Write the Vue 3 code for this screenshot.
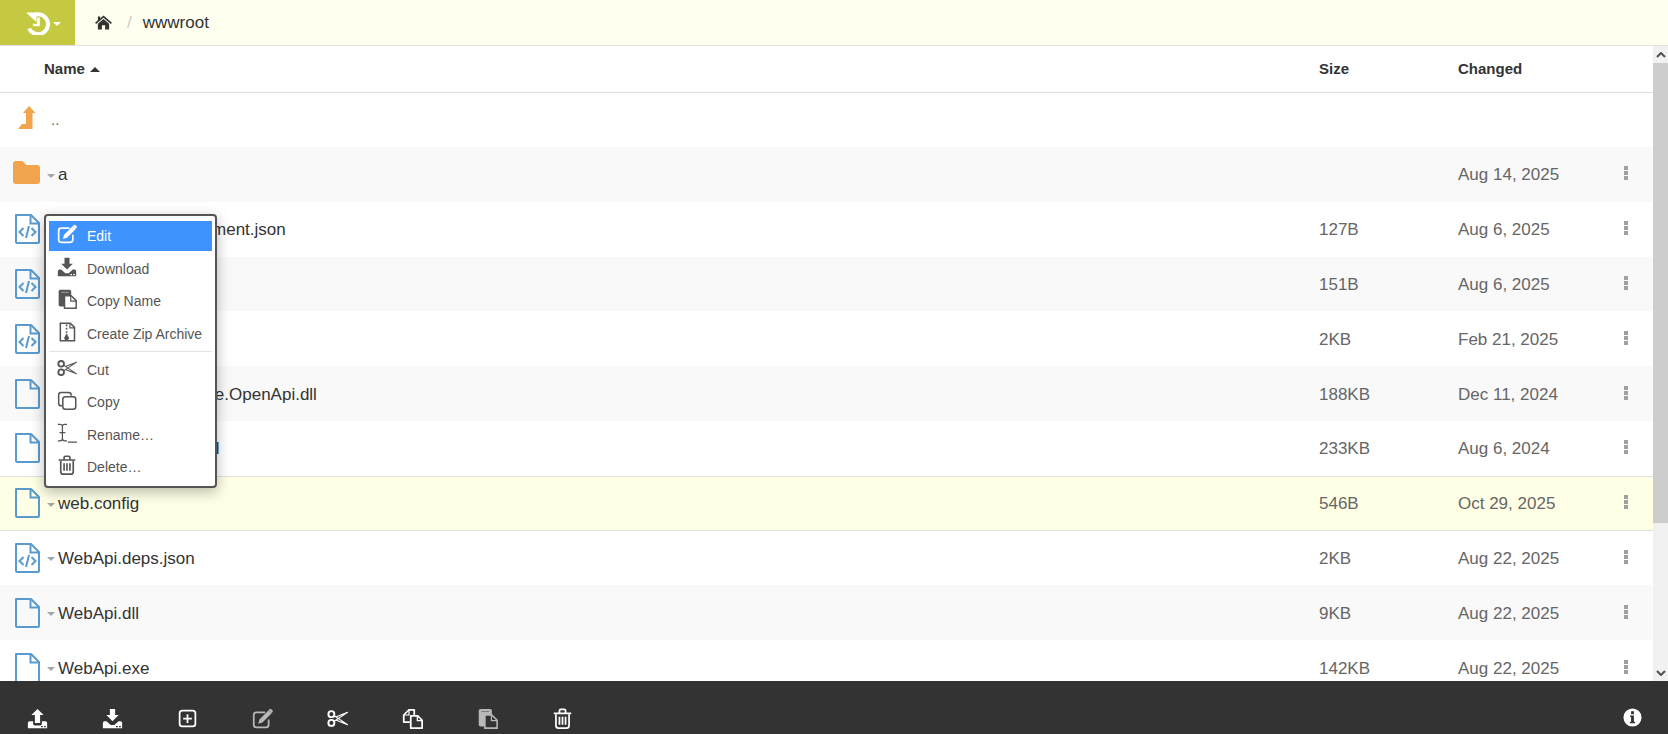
<script setup>
const files = [
  { name: 'a', icon: 'folder', size: '', date: 'Aug 14, 2025' },
  { name: 'appsettings.Development.json', icon: 'code', size: '127B', date: 'Aug 6, 2025' },
  { name: 'appsettings.json', icon: 'code', size: '151B', date: 'Aug 6, 2025' },
  { name: 'swagger.json', icon: 'code', size: '2KB', date: 'Feb 21, 2025' },
  { name: 'Microsoft.AspNetCore.OpenApi.dll', icon: 'file', size: '188KB', date: 'Dec 11, 2024' },
  { name: 'Microsoft.OpenApi.dll', icon: 'file', size: '233KB', date: 'Aug 6, 2024' },
  { name: 'web.config', icon: 'file', size: '546B', date: 'Oct 29, 2025', selected: true },
  { name: 'WebApi.deps.json', icon: 'code', size: '2KB', date: 'Aug 22, 2025' },
  { name: 'WebApi.dll', icon: 'file', size: '9KB', date: 'Aug 22, 2025' },
  { name: 'WebApi.exe', icon: 'file', size: '142KB', date: 'Aug 22, 2025' }
]
const menuTop = [
  { label: 'Edit', icon: 'i-edit', active: true },
  { label: 'Download', icon: 'i-download' },
  { label: 'Copy Name', icon: 'i-paste' },
  { label: 'Create Zip Archive', icon: 'i-zip' }
]
const menuBottom = [
  { label: 'Cut', icon: 'i-cut' },
  { label: 'Copy', icon: 'i-squares' },
  { label: 'Rename…', icon: 'i-rename' },
  { label: 'Delete…', icon: 'i-trash' }
]
const actions = [
  { icon: 'i-upload' },
  { icon: 'i-download' },
  { icon: 'i-plus' },
  { icon: 'i-edit', dim: true },
  { icon: 'i-cut' },
  { icon: 'i-copy' },
  { icon: 'i-paste', dim: true },
  { icon: 'i-trash' }
]
</script>

<template>
  <div class="app">
    <svg class="defs" aria-hidden="true">
      <symbol id="i-upload" viewBox="0 0 24 24">
        <path fill="currentColor" d="M12 1l7 7h-4v9H9V8H5z" />
        <path fill="currentColor" fill-rule="evenodd" d="M1 17q0-2 2-2h4v3q0 2 2 2h6q2 0 2-2v-3h4q2 0 2 2v6H1zM16 20.500v1.500h2v-1.500zM19.500 20.500v1.500h2v-1.500z" />
      </symbol>
      <symbol id="i-download" viewBox="0 0 24 24">
        <path fill="currentColor" d="M9 1h6v7h4l-7 7-7-7h4z" />
        <path fill="currentColor" fill-rule="evenodd" d="M1 17q0-2 2-2h2l5 4.500h4l5-4.500h2q2 0 2 2v6H1zM16 20.500v1.500h2v-1.500zM19.500 20.500v1.500h2v-1.500z" />
      </symbol>
      <symbol id="i-plus" viewBox="0 0 24 24">
        <rect x="3" y="3" width="18" height="18" rx="3" fill="none" stroke="currentColor" stroke-width="2" />
        <path d="M12 7v10M7 12h10" fill="none" stroke="currentColor" stroke-width="2" />
      </symbol>
      <symbol id="i-edit" viewBox="0 0 24 24">
        <path d="M19 13v6q0 3-3 3H5q-3 0-3-3V8q0-3 3-3h10" fill="none" stroke="currentColor" stroke-width="2" />
        <path fill="currentColor" d="M19 2.500l3.500 3.500-10.500 10.500-5 1.500 1.500-5zM20 1.500q1-1 2-.2l1.500 1.500q.8 1-.2 2l-.8.800-3.500-3.500z" />
      </symbol>
      <symbol id="i-cut" viewBox="0 0 24 24">
        <circle cx="5" cy="7" r="3.400" fill="none" stroke="currentColor" stroke-width="2.200" />
        <circle cx="5" cy="17" r="3.400" fill="none" stroke="currentColor" stroke-width="2.200" />
        <path d="M7.800 8.500l15.700 10.500-13.500-5.300M7.800 15.500l15.700-10.500-13.500 5.300" fill="none" stroke="currentColor" stroke-width="1.300" stroke-linejoin="round" />
      </symbol>
      <symbol id="i-copy" viewBox="0 0 24 24">
        <path d="M9 16H2V8l6-6h6v6" fill="none" stroke="currentColor" stroke-width="2" stroke-linejoin="round" />
        <path d="M8 2v6H2" fill="none" stroke="currentColor" stroke-width="1.400" />
        <path d="M10 9h8l5 5v9H10z" fill="none" stroke="currentColor" stroke-width="2" stroke-linejoin="round" />
        <path d="M17.500 9v5.500H23" fill="none" stroke="currentColor" stroke-width="1.400" />
      </symbol>
      <symbol id="i-squares" viewBox="0 0 24 24">
        <path d="M6 19H5q-3 0-3-3V6q0-3 3-3h9q3 0 3 3v1" fill="none" stroke="currentColor" stroke-width="1.800" />
        <rect x="7" y="8" width="15.500" height="15" rx="3" fill="none" stroke="currentColor" stroke-width="1.800" />
      </symbol>
      <symbol id="i-paste" viewBox="0 0 24 24">
        <path fill="currentColor" d="M2 3q0-2 2-2h11q2 0 2 2v18H4q-2 0-2-2z" />
        <path d="M9 8h8l6 6v9H9z" fill="var(--pg, #fff)" stroke="currentColor" stroke-width="1.800" />
        <path d="M16.500 8v6.500H23" fill="none" stroke="currentColor" stroke-width="1.400" />
        <path d="M5 4h9" stroke="var(--pg, #fff)" stroke-width="1" opacity=".5" />
      </symbol>
      <symbol id="i-zip" viewBox="0 0 24 24">
        <path d="M4 1.500h12l5 5v16H4z" fill="none" stroke="currentColor" stroke-width="1.800" />
        <path d="M15.500 1.500v5.500H21" fill="none" stroke="currentColor" stroke-width="1.400" />
        <path d="M10.500 3h2v2h-2zM10.500 7h2v2h-2zM10.500 11h2v2h-2z" fill="currentColor" />
        <path d="M11.500 13.500l2.700 5a2.800 2.800 0 1 1-5.400 0z" fill="currentColor" />
      </symbol>
      <symbol id="i-rename" viewBox="0 0 24 24">
        <path d="M1 1.500h2.500q3 0 3 2.500v15q0 2.500-3 2.500H1M12 1.500H9.500q-3 0-3 2.500v15q0 2.500 3 2.500H12M3 11.500h7M13 23h11" fill="none" stroke="currentColor" stroke-width="1.500" />
      </symbol>
      <symbol id="i-trash" viewBox="0 0 24 24">
        <path d="M2 6h20M8.500 5V3q0-1.500 1.500-1.500h4q1.500 0 1.500 1.500v2" fill="none" stroke="currentColor" stroke-width="2" />
        <path d="M4.500 7v13q0 3 3 3h9q3 0 3-3V7" fill="none" stroke="currentColor" stroke-width="2" />
        <path d="M8.500 10v9M12 10v9M15.500 10v9" fill="none" stroke="currentColor" stroke-width="2" />
      </symbol>
      <symbol id="i-file" viewBox="0 0 30 30">
        <path d="M4 1h15l8 8v19q0 1-1 1H5q-1 0-1-1z" fill="none" stroke="currentColor" stroke-width="2" stroke-linejoin="round" />
        <path d="M18.500 1v8.500H27" fill="none" stroke="currentColor" stroke-width="2" />
      </symbol>
    </svg>

    <header class="toolbar">
      <button class="history">
        <svg class="history-icon" viewBox="0 0 24 24">
          <path d="M5 6A10 10 0 1 1 3 17.500" fill="none" stroke="#fff" stroke-width="4" />
          <path d="M0 1.500h10.500V11z" fill="#fff" />
          <path d="M12.500 6.500v7.500H7" fill="none" stroke="#fff" stroke-width="2.600" />
        </svg>
        <span class="caret caret-white"></span>
      </button>
      <nav class="crumbs">
        <svg class="home" viewBox="0 0 18 16">
          <path fill="#333" d="M9 0.500L18 8.300l-1.100 1.300L9 2.900 1.100 9.600 0 8.300 3 5.700V1.500h2.500v2.100z" />
          <path fill="#333" d="M9 4.300l6 5.100V15.500H10.700V11H7.300v4.500H3V9.400z" />
        </svg>
        <span class="slash">/</span>
        <span class="crumb">wwwroot</span>
      </nav>
    </header>

    <div class="main">
      <div class="content">
        <div class="grid head">
          <div class="head-name">Name <span class="caret-up"></span></div>
          <div>Size</div>
          <div>Changed</div>
          <div></div>
        </div>
        <div class="list">
          <div class="grid row row-up">
            <div class="name-cell">
              <svg class="row-icon" viewBox="0 0 30 30">
                <path fill="#f2a44c" d="M17 1L23.500 8H20.500V24H6L10 19H14V8H11Z" />
              </svg>
              <span class="dots">..</span>
            </div>
            <div></div>
            <div></div>
            <div></div>
          </div>
          <div
            v-for="(f, i) in files"
            :key="f.name"
            class="grid row"
            :class="{ even: i % 2 === 0, selected: f.selected }"
          >
            <div class="name-cell">
              <svg v-if="f.icon === 'folder'" class="row-icon" viewBox="0 0 30 30">
                <path fill="#f2a44c" d="M1 5a3 3 0 0 1 3-3h6.500l4 4H25a3 3 0 0 1 3 3v13a3 3 0 0 1-3 3H4a3 3 0 0 1-3-3z" />
              </svg>
              <svg v-else class="row-icon file-icon" viewBox="0 0 30 30">
                <use href="#i-file" />
                <path
                  v-if="f.icon === 'code'"
                  d="M11.500 14l-4 4 4 4M19.500 14l4 4-4 4M17 12l-3 12"
                  fill="none"
                  stroke="currentColor"
                  stroke-width="2"
                />
              </svg>
              <span class="caret caret-gray"></span>
              <span class="fname">{{ f.name }}</span>
            </div>
            <div class="meta">{{ f.size }}</div>
            <div class="meta">{{ f.date }}</div>
            <div class="kebab"><i></i><i></i><i></i></div>
          </div>
        </div>
      </div>
      <div class="scrollbar">
        <div class="sb-btn">
          <svg viewBox="0 0 10 6" class="chev"><path d="M1 5l4-4 4 4" fill="none" stroke="#505050" stroke-width="2" /></svg>
        </div>
        <div class="sb-thumb"></div>
        <div class="sb-track"></div>
        <div class="sb-btn">
          <svg viewBox="0 0 10 6" class="chev"><path d="M1 1l4 4 4-4" fill="none" stroke="#505050" stroke-width="2" /></svg>
        </div>
      </div>
    </div>

    <footer class="actions">
      <button v-for="(a, i) in actions" :key="i" class="act" :class="{ dim: a.dim }">
        <svg class="act-icon"><use :href="'#' + a.icon" /></svg>
      </button>
      <div class="spacer"></div>
      <svg class="info" viewBox="0 0 20 20">
        <circle cx="10" cy="10" r="9.500" fill="#fff" />
        <path fill="#333" d="M8.500 3.500h3v3h-3zM7.500 8h4v6.500h1.300V16H7.200v-1.500h1.300V9.500h-1z" />
      </svg>
    </footer>

    <div class="menu">
      <div
        v-for="m in menuTop"
        :key="m.label"
        class="menu-item"
        :class="{ active: m.active }"
      >
        <svg class="menu-icon"><use :href="'#' + m.icon" /></svg>
        <span>{{ m.label }}</span>
      </div>
      <div class="sep"></div>
      <div v-for="m in menuBottom" :key="m.label" class="menu-item">
        <svg class="menu-icon"><use :href="'#' + m.icon" /></svg>
        <span>{{ m.label }}</span>
      </div>
    </div>
  </div>
</template>

<style>
html, body { margin: 0; padding: 0; overflow: hidden; }
</style>

<style scoped>
.app {
  position: relative;
  height: 734px;
  width: 1668px;
  display: flex;
  flex-direction: column;
  overflow: hidden;
  background: #fff;
  color: #333;
  font-family: "Liberation Sans", Arial, sans-serif;
}
.defs { position: absolute; width: 0; height: 0; }
button { border: 0; padding: 0; background: none; }

.toolbar {
  flex: none;
  height: 45px;
  display: flex;
  align-items: stretch;
  background: #fffff0;
  border-bottom: 1px solid #e0e0e0;
}
.history {
  width: 75px;
  background: #c4c941;
  display: flex;
  align-items: center;
  padding-left: 26px;
}
.history-icon { width: 24px; height: 24px; }
.caret {
  display: block;
  width: 0;
  height: 0;
  border-left: 4px solid transparent;
  border-right: 4px solid transparent;
  border-top: 4px solid #fff;
}
.caret-white { margin-left: 3px; margin-top: 3px; }
.crumbs {
  display: flex;
  align-items: center;
  padding-left: 20px;
  font-size: 17px;
}
.home { width: 17px; height: 15px; margin-bottom: 1px; }
.slash { color: #ccc; margin-left: 15px; font-size: 17px; }
.crumb { margin-left: 11px; color: #333; }

.main { flex: 1; min-height: 0; display: flex; }
.content { flex: 1; min-width: 0; display: flex; flex-direction: column; }
.grid {
  display: grid;
  grid-template-columns: 1fr 139px 150px 45px;
  align-items: center;
}
.head {
  flex: none;
  height: 46px;
  box-sizing: content-box;
  padding-bottom: 0;
  border-bottom: 1px solid #e0e0e0;
  font-size: 15px;
  font-weight: 700;
  color: #333;
  line-height: 44px;
}
.head-name { padding-left: 44px; display: flex; align-items: center; gap: 5px; }
.caret-up {
  display: block;
  width: 0;
  height: 0;
  border-left: 5px solid transparent;
  border-right: 5px solid transparent;
  border-bottom: 5px solid #333;
}
.list { flex: 1; min-height: 0; overflow: hidden; }
.row {
  box-sizing: border-box;
  height: 54.8px;
  font-size: 17px;
}
.row-up { height: 54px; }
.even { background: #f9f9f9; }
.selected { background: #ffffe6; border-top: 1px solid #e0e0e0; border-bottom: 1px solid #e0e0e0; }
.name-cell { display: flex; align-items: center; padding-left: 12px; min-width: 0; }
.row-icon { width: 30px; height: 30px; flex: none; }
.file-icon { color: #5a9bcf; }
.caret-gray {
  margin-left: 5px;
  margin-top: 3px;
  border-top-color: #a5a5a5;
  flex: none;
}
.fname { margin-left: 3px; margin-top: 2px; color: #333; white-space: nowrap; }
.dots { margin-left: 9px; margin-top: -1px; color: #666; font-size: 15px; }
.meta { color: #666; padding-top: 2px; }
.kebab {
  display: flex;
  flex-direction: column;
  gap: 1px;
  margin-left: 16px;
  margin-top: -2px;
  width: 4px;
}
.kebab i { display: block; width: 4px; height: 4px; background: #a0a0a0; }

.scrollbar {
  flex: none;
  width: 15px;
  display: flex;
  flex-direction: column;
  background: #f1f1f1;
}
.sb-btn {
  flex: none;
  height: 17px;
  display: flex;
  align-items: center;
  justify-content: center;
}
.chev { width: 10px; height: 6px; }
.sb-thumb { flex: none; height: 460px; background: #cdcdcd; }
.sb-track { flex: 1; }

.actions {
  flex: none;
  height: 53px;
  box-sizing: border-box;
  background: #333;
  display: flex;
  align-items: flex-start;
  padding-top: 27px;
  color: #fff;
}
.act { width: 75px; height: 20px; display: flex; justify-content: center; color: #fff; --pg: #333; }
.act.dim { color: #b8b8b8; }
.act-icon { width: 21px; height: 21px; }
.spacer { flex: 1; }
.info { width: 19px; height: 19px; margin-right: 26px; }

.menu {
  position: absolute;
  left: 44px;
  top: 214px;
  width: 173px;
  box-sizing: border-box;
  background: #fff;
  border: 2px solid #555;
  border-radius: 4px;
  padding: 5px 3px 3.500px;
  display: flex;
  flex-direction: column;
  gap: 2.500px;
  box-shadow: 0 4px 14px rgba(0, 0, 0, .28);
  font-size: 14px;
  color: #555;
}
.menu-item {
  height: 30px;
  display: flex;
  align-items: center;
  padding-left: 8px;
  gap: 10px;
}
.menu-icon { width: 20px; height: 20px; margin-top: -4px; flex: none; color: #555; --pg: #fff; }
.active { background: #3f93ff; color: #fff; }
.active .menu-icon { color: #fff; }
.sep { height: 1px; background: #e2e2e2; }
</style>
